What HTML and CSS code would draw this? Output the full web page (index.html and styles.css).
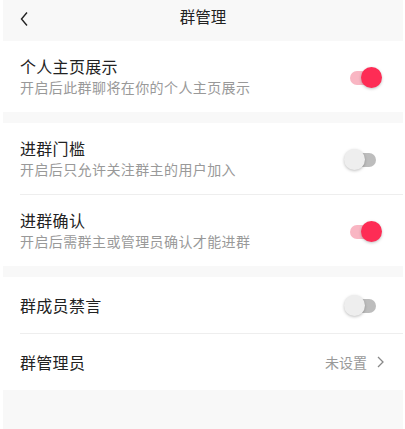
FILE: index.html
```html
<!DOCTYPE html>
<html lang="zh-CN">
<head>
  <meta charset="UTF-8">
  <title>群管理</title>
  <link rel="stylesheet" href="styles.css">
</head>
<body>
  <div class="page">
    <div class="nav-bar">
      <span class="back">
        <svg width="10" height="16" viewBox="0 0 10 16"><path d="M8 1.5 L2.5 8 L8 14.5" fill="none" stroke="#222" stroke-width="1.4"/></svg>
      </span>
      <span class="nav-title">群管理</span>
    </div>

    <div class="card">
      <div class="row">
        <div class="row-text">
          <div class="row-title">个人主页展示</div>
          <div class="row-desc">开启后此群聊将在你的个人主页展示</div>
        </div>
        <span class="switch on"></span>
      </div>
    </div>

    <div class="card">
      <div class="row">
        <div class="row-text">
          <div class="row-title">进群门槛</div>
          <div class="row-desc">开启后只允许关注群主的用户加入</div>
        </div>
        <span class="switch"></span>
      </div>
      <div class="row">
        <div class="row-text">
          <div class="row-title">进群确认</div>
          <div class="row-desc">开启后需群主或管理员确认才能进群</div>
        </div>
        <span class="switch on"></span>
      </div>
    </div>

    <div class="card">
      <div class="row single">
        <div class="row-title">群成员禁言</div>
        <span class="switch"></span>
      </div>
      <div class="row single">
        <div class="row-title">群管理员</div>
        <span class="row-value">未设置
          <svg width="8" height="12" viewBox="0 0 8 12"><path d="M2 1 L7 6 L2 11" fill="none" stroke="#888" stroke-width="1.3"/></svg>
        </span>
      </div>
    </div>
  </div>
</body>
</html>
```

FILE: styles.css
```css
body {
  margin: 0;
  background-color: #fff;
  font-family: "Noto Sans CJK SC", "Noto Sans", sans-serif;
  color: #222;
}

.page {
  margin: 0 2px 0 3px;
  min-height: 429px;
  background-color: #f8f8f8;
}

.nav-bar {
  height: 41px;
  display: flex;
  align-items: center;
  justify-content: center;
  position: relative;
  background-color: #f8f8f8;
}

.back {
  position: absolute;
  left: 16px;
  top: 8px;
}

.nav-title {
  font-size: 15.5px;
  margin-top: -10px;
}

.card {
  background-color: #fff;
  padding-left: 17px;
  margin-bottom: 11px;
}

.row {
  display: flex;
  align-items: center;
  justify-content: space-between;
  height: 71px;
  padding-right: 27px;
  border-bottom: 1px solid #eee;
}

.row:last-child {
  border-bottom: none;
}

.card:first-of-type .row {
  height: 72px;
}

.row.single {
  height: 56px;
}

.row-title {
  font-size: 16px;
  letter-spacing: 0.3px;
  line-height: 22px;
}

.row-desc {
  font-size: 14px;
  letter-spacing: 0.4px;
  line-height: 21px;
  color: #999;
}

.row-value {
  font-size: 14px;
  color: #999;
  display: flex;
  align-items: center;
  gap: 9px;
  margin-right: -8px;
}

.switch {
  position: relative;
  width: 26px;
  height: 14px;
  border-radius: 7px;
  background-color: #bdbdbd;
  margin-top: 2px;
}

.switch::after {
  content: "";
  position: absolute;
  left: -6px;
  top: -4px;
  width: 21px;
  height: 21px;
  border-radius: 50%;
  background-color: #eee;
  box-shadow: 0 1px 3px rgba(0, 0, 0, 0.25);
}

.switch.on {
  background-color: #f9b6c3;
}

.switch.on::after {
  left: auto;
  right: -6px;
  background-color: #fe2c55;
}
```
